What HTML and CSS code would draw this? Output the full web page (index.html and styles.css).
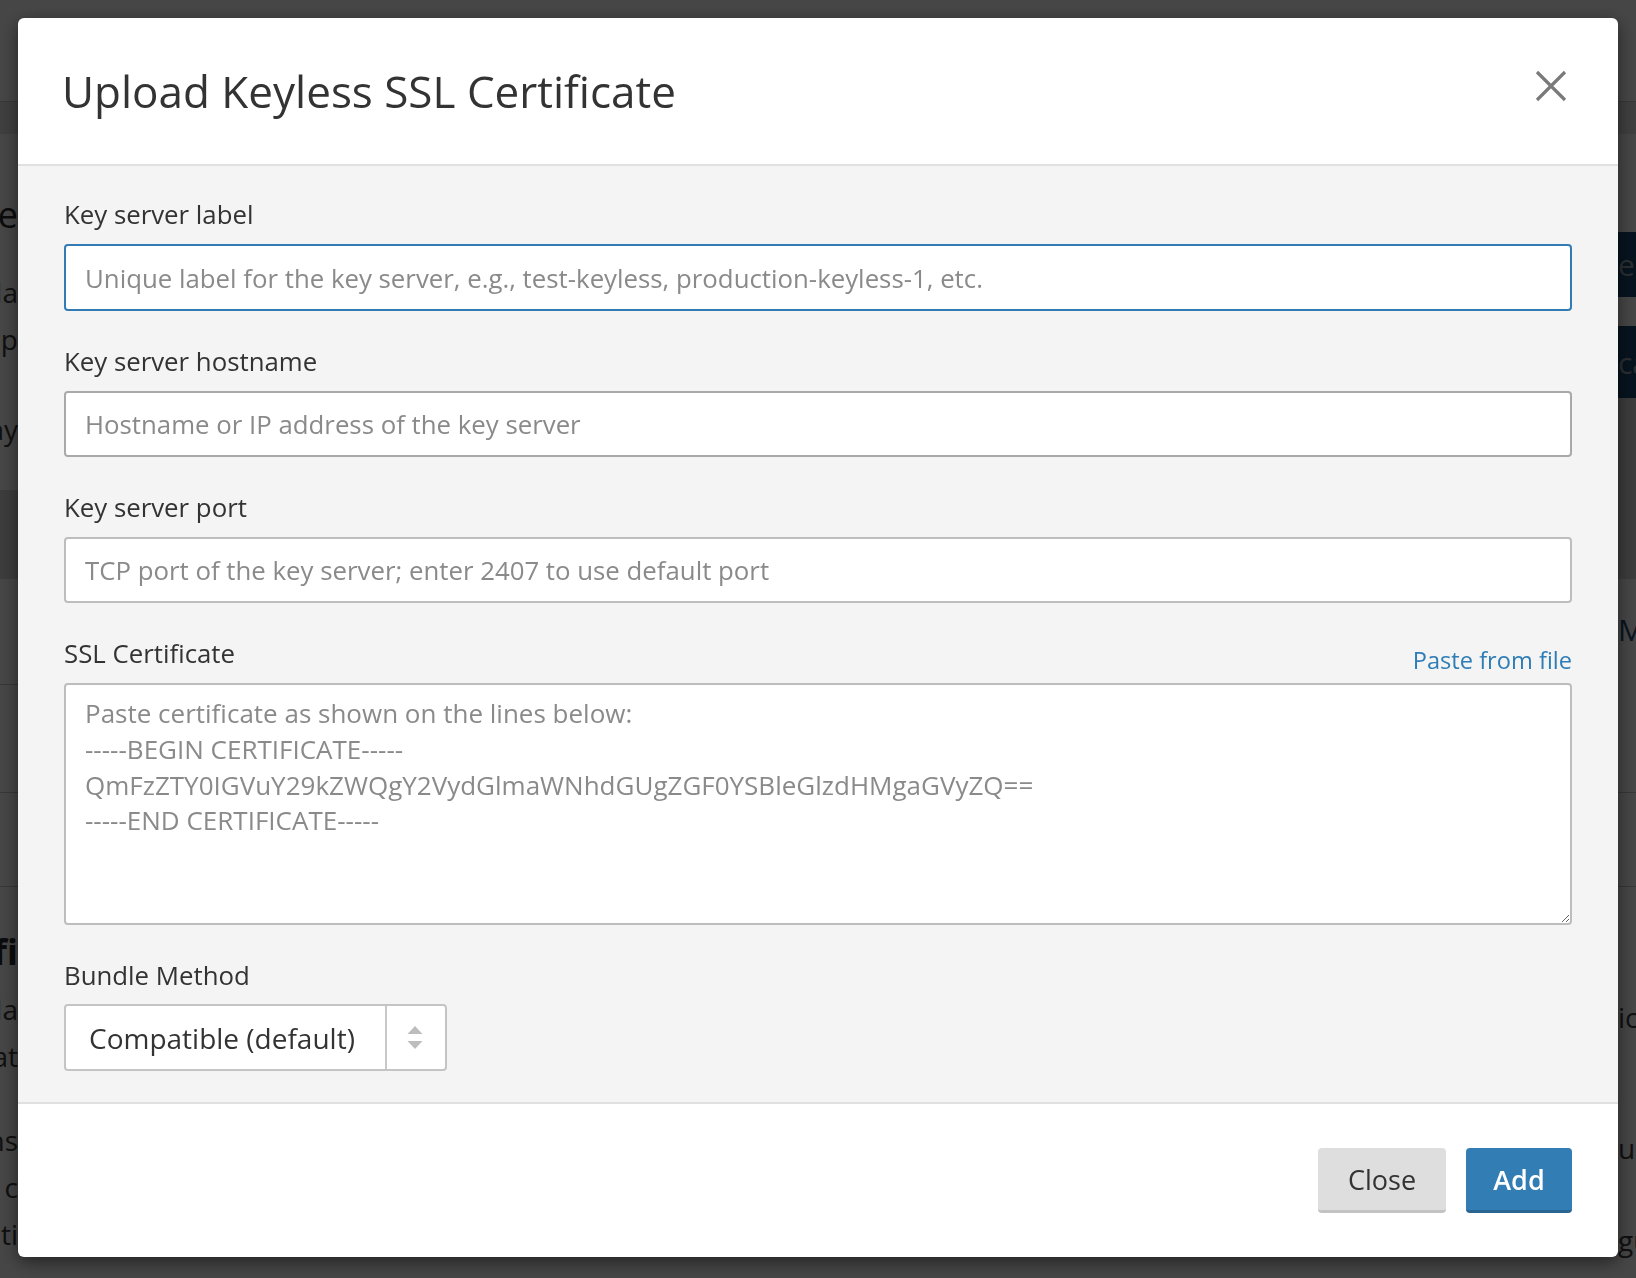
FILE: index.html
```html
<!DOCTYPE html>
<html lang="en">
<head>
<meta charset="utf-8">
<title>Upload Keyless SSL Certificate</title>
<link rel="stylesheet" href="styles.css">
</head>
<body>
<div class="page">
  <div class="page-top"></div>
  <div class="page-sub"></div>
  <div class="page-main">
    <div class="gutter gutter-left">
      <div class="g-head g-head-1">Upload Custom SSL Certificate</div>
      <div class="g-line g-first">Certificates must include a key server la</div>
      <div class="g-line">ssl and keyless p</div>
      <div class="g-line g-gap">using the default gateway</div>
      <div class="g-band"></div>
      <div class="g-rule g-rule-1"></div>
      <div class="g-rule g-rule-2"></div>
      <div class="g-rule g-rule-3"></div>
      <div class="g-head g-head-2">Keyless SSL Certifi</div>
      <div class="g-line g-first-2">Keyless SSL allows you to use the SSL la</div>
      <div class="g-line">without sharing your private key data at</div>
      <div class="g-line g-gap-2">Some configuratio ns</div>
      <div class="g-line">all requests from c</div>
      <div class="g-line">location ti</div>
    </div>
    <div class="gutter gutter-right">
      <div class="g-btn g-btn-1">e Keys</div>
      <div class="g-btn g-btn-2">ca Certs</div>
      <div class="g-band-r"></div>
      <div class="g-rule g-rule-1b"></div>
      <div class="g-link">Manage</div>
      <div class="g-rule g-rule-2b"></div>
      <div class="g-rule g-rule-3"></div>
      <div class="g-line g-first-r">ic regions</div>
      <div class="g-line g-gap-r">ur settings</div>
      <div class="g-line g-gap-r2">gured keys</div>
    </div>
  </div>
  <p class="page-bottom">regions not permitted will use Keyless SSL technology to complete the handshake with the nearest allowed region.</p>
</div>

<div class="overlay"></div>

<div class="modal" role="dialog" aria-labelledby="modal-title">
  <header class="modal-header">
    <h2 class="modal-title" id="modal-title">Upload Keyless SSL Certificate</h2>
    <button class="modal-close" type="button" aria-label="Close">
      <svg viewBox="0 0 32 32" width="32" height="32" aria-hidden="true"><path d="M2 2 L30 30 M30 2 L2 30" stroke="currentColor" stroke-width="3.2" fill="none"/></svg>
    </button>
  </header>

  <div class="modal-body">
    <div class="field">
      <label class="field-label" for="ks-label">Key server label</label>
      <input class="field-input is-focused" id="ks-label" type="text" placeholder="Unique label for the key server, e.g., test-keyless, production-keyless-1, etc.">
    </div>
    <div class="field">
      <label class="field-label" for="ks-host">Key server hostname</label>
      <input class="field-input is-hover" id="ks-host" type="text" placeholder="Hostname or IP address of the key server">
    </div>
    <div class="field">
      <label class="field-label" for="ks-port">Key server port</label>
      <input class="field-input" id="ks-port" type="text" placeholder="TCP port of the key server; enter 2407 to use default port">
    </div>
    <div class="field">
      <div class="field-head">
        <label class="field-label" for="ks-cert">SSL Certificate</label>
        <a class="field-link" href="#">Paste from file</a>
      </div>
      <textarea class="field-textarea" id="ks-cert" placeholder="Paste certificate as shown on the lines below:&#10;-----BEGIN CERTIFICATE-----&#10;QmFzZTY0IGVuY29kZWQgY2VydGlmaWNhdGUgZGF0YSBleGlzdHMgaGVyZQ==&#10;-----END CERTIFICATE-----"></textarea>
    </div>
    <div class="field field-last">
      <label class="field-label field-label-select">Bundle Method</label>
      <div class="select">
        <span class="select-value">Compatible (default)</span>
        <span class="select-arrows">
          <svg viewBox="0 0 16 24" width="16" height="24" aria-hidden="true"><path d="M8 0 L15.5 8 L0.5 8 Z M0.5 15 L15.5 15 L8 23 Z" fill="currentColor"/></svg>
        </span>
      </div>
    </div>
  </div>

  <footer class="modal-footer">
    <button class="btn btn-default" type="button">Close</button>
    <button class="btn btn-primary" type="button">Add</button>
  </footer>
</div>
</body>
</html>
```

FILE: styles.css
```css
* { box-sizing: border-box; }

html, body {
  margin: 0;
  padding: 0;
}

body {
  font-family: "Open Sans", "Liberation Sans", sans-serif;
  color: #333;
  background: #fafafa;
  overflow: hidden;
  width: 1636px;
  height: 1278px;
}

/* ---------- page behind the dialog ---------- */
.page {
  height: 1278px;
  overflow: hidden;
}

.page-top {
  height: 102px;
  border-bottom: 1px solid #c9c9c9;
}

.page-sub {
  height: 32px;
  background: #e2e2e2;
}

.page-main {
  display: flex;
  justify-content: space-between;
  height: 1131px;
}

.gutter {
  width: 18px;
  display: flex;
  flex-direction: column;
  font-size: 28px;
  color: #3a3a3a;
}

.g-line,
.g-head,
.g-btn,
.g-link {
  white-space: nowrap;
  overflow: hidden;
  display: flex;
  align-items: center;
}

.gutter-left .g-line,
.gutter-left .g-head {
  justify-content: flex-end;
}

.g-line {
  height: 47px;
}

.g-head {
  font-size: 36px;
  font-weight: 700;
  height: 44px;
  color: #2a2a2a;
}

.g-head-1 { margin-top: 58px; font-weight: 400; }
.g-first { margin-top: 32px; }
.g-gap { margin-top: 43px; }

.g-band {
  margin-top: 38px;
  height: 89px;
  background: #d6d6d6;
}

.g-rule {
  border-bottom: 1px solid #c4c4c4;
}
.g-rule-1 { height: 106px; }
.g-rule-2 { height: 108px; }
.g-rule-3 { height: 94px; }
.g-head-2 { margin-top: 42px; }
.g-first-2 { margin-top: 12px; }
.g-gap-2 { margin-top: 37px; }

.g-btn {
  background: #17456b;
  color: #9aa4ad;
  font-size: 30px;
}
.g-btn-1 { margin-top: 98px; height: 65px; }
.g-btn-2 { margin-top: 29px; height: 72px; }

.g-band-r {
  height: 181px;
  background: #d6d6d6;
}

.g-rule-1b { height: 27px; border-bottom: none; }
.g-link {
  height: 47px;
  color: #1d4a70;
  font-size: 30px;
}
.g-rule-2b { height: 140px; }

.g-first-r { margin-top: 106px; }
.g-gap-r { margin-top: 84px; }
.g-gap-r2 { margin-top: 45px; }

.page-bottom {
  margin: 0;
  font-size: 29px;
  line-height: 47px;
  white-space: nowrap;
  color: #3a3a3a;
}

/* ---------- overlay ---------- */
.overlay {
  position: fixed;
  inset: 0;
  background: rgba(0, 0, 0, 0.72);
}

/* ---------- dialog ---------- */
.modal {
  position: fixed;
  top: 18px;
  left: 18px;
  width: 1600px;
  background: #fff;
  border-radius: 6px;
  box-shadow: 0 5px 18px rgba(0, 0, 0, 0.5);
  overflow: hidden;
}

.modal-header {
  height: 148px;
  padding: 43px 51px 0 44px;
  display: flex;
  justify-content: space-between;
  align-items: flex-start;
  border-bottom: 2px solid #e0e0e0;
}

.modal-title {
  margin: 0;
  font-size: 44px;
  font-weight: 400;
  line-height: 61.6px;
  color: #333;
}

.modal-close {
  margin-top: 9px;
  width: 32px;
  height: 32px;
  padding: 0;
  border: 0;
  background: none;
  color: #7a7a7a;
  cursor: pointer;
  display: flex;
}

.modal-body {
  background: #f4f4f4;
  padding: 30px 46px 31px 46px;
}

.field {
  margin-bottom: 32px;
}

.field-last {
  margin-bottom: 0;
}

.field-label {
  display: block;
  font-size: 25.8px;
  line-height: 36px;
  color: #333;
  margin-bottom: 12px;
}

.field-label-select {
  margin-bottom: 11px;
}

.field-head {
  display: flex;
  justify-content: space-between;
  margin-bottom: 12px;
}

.field-head .field-label {
  margin-bottom: 0;
}

.field-link {
  align-self: flex-end;
  font-size: 23.6px;
  line-height: 22px;
  color: #2f7db6;
  text-decoration: none;
}

.field-input,
.field-textarea {
  display: block;
  width: 100%;
  font-family: inherit;
  color: #333;
  background: #fff;
  border: 2px solid #bdbdbd;
  border-radius: 4px;
  outline: none;
}

.field-input {
  height: 66px;
  padding: 0 19px;
  font-size: 25.8px;
}

.field-input.is-focused {
  height: 67px;
  border-color: #327bb4;
}

.field-input.is-hover {
  border-color: #a9a9a9;
}

.field-input::placeholder,
.field-textarea::placeholder {
  color: #8a8a8a;
  opacity: 1;
}

.field-textarea {
  height: 242px;
  padding: 11px 19px;
  font-size: 26px;
  line-height: 35.8px;
  resize: vertical;
}

.select {
  width: 383px;
  height: 67px;
  display: flex;
  background: #fff;
  border: 2px solid #c4c4c4;
  border-radius: 4px;
}

.select-value {
  flex: 1;
  display: flex;
  align-items: center;
  padding-left: 23px;
  font-size: 28px;
  color: #333;
  border-right: 2px solid #c8c8c8;
}

.select-arrows {
  width: 58px;
  display: flex;
  align-items: center;
  justify-content: center;
  color: #bdbdbd;
  padding-right: 2px;
}

.modal-footer {
  height: 155px;
  border-top: 2px solid #e0e0e0;
  padding: 0 46px;
  display: flex;
  justify-content: flex-end;
  align-items: center;
  gap: 20px;
}

.btn {
  height: 65px;
  font-family: inherit;
  font-size: 27px;
  border: 0;
  border-radius: 4px;
  cursor: pointer;
}

.btn-default {
  width: 128px;
  background: #dedede;
  border-bottom: 3px solid #c3c3c3;
  color: #333;
}

.btn-primary {
  width: 106px;
  background: #327db3;
  border-bottom: 3px solid #2a6592;
  color: #fff;
  font-weight: 600;
}
```
